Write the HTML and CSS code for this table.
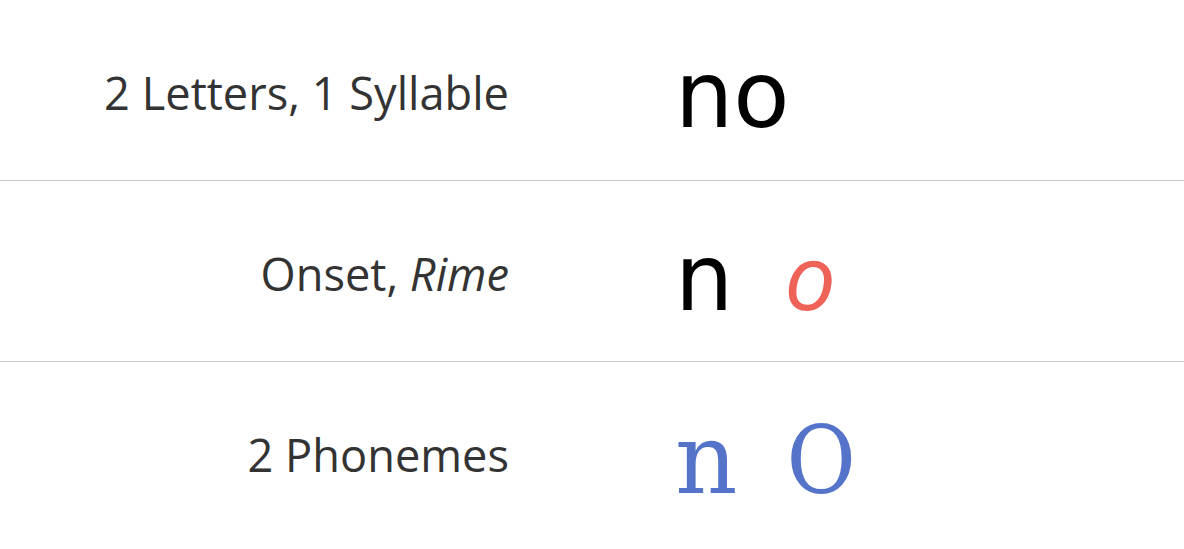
FILE: index.html
```html
<!DOCTYPE html>
<html>
<head>
<meta charset="utf-8">
<link rel="stylesheet" href="styles.css">
</head>
<body>
<div class="table">
  <div class="row">
    <div class="label">2 Letters, 1 Syllable</div>
    <div class="word sans"><span>no</span></div>
  </div>
  <div class="row">
    <div class="label">Onset, <em>Rime</em></div>
    <div class="word sans"><span>n</span><span class="rime">o</span></div>
  </div>
  <div class="row last">
    <div class="label">2 Phonemes</div>
    <div class="word serif"><span>n</span><span class="ph2">O</span></div>
  </div>
</div>
</body>
</html>
```
FILE: styles.css
```css
html, body {
  margin: 0;
  padding: 0;
  background: #fff;
}
.table {
  display: flex;
  flex-direction: column;
}
.row {
  display: grid;
  grid-template-columns: 509px 1fr;
  column-gap: 166px;
  align-items: center;
  height: 180px;
  border-bottom: 1px solid #c8c8c8;
}
.row.last {
  border-bottom: none;
}
.label {
  font-family: "Open Sans", sans-serif;
  font-size: 45.2px;
  line-height: 1.2;
  color: #333;
  text-align: right;
  padding-top: 6px;
}
.label em {
  font-style: italic;
}
.word {
  font-size: 92px;
  line-height: 1;
  color: #000;
  display: flex;
  align-items: baseline;
  padding-top: 12px;
}
.sans {
  font-family: "DejaVu Sans", sans-serif;
}
.rime {
  font-family: "Open Sans", sans-serif;
  font-style: italic;
  color: #ef6257;
  margin-left: 51px;
}
.serif {
  font-family: "DejaVu Serif", serif;
  font-size: 97px;
  color: #5473c9;
  padding-top: 14px;
}
.ph2 {
  font-family: "DejaVu Serif Condensed", "DejaVu Serif", serif;
  font-stretch: condensed;
  font-size: 94px;
  margin-left: 49px;
}
```
